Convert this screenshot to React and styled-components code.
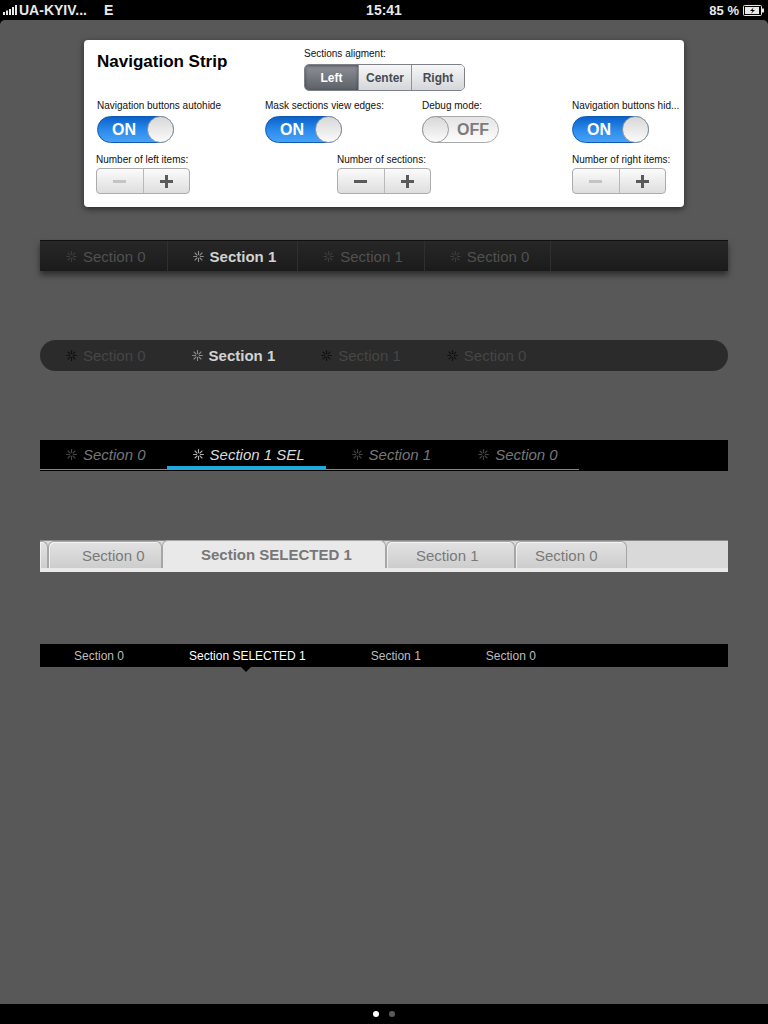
import React from 'react'
import styled, { createGlobalStyle, css } from 'styled-components'

const GlobalStyle = createGlobalStyle`
    html, body {
        margin: 0;
        padding: 0;
        background: #000;
    }
    body {
        font-family: "Liberation Sans", Arial, sans-serif;
    }
    * {
        box-sizing: border-box;
    }
`

const Screen = styled.div`
    width: 768px;
    height: 1024px;
    display: flex;
    flex-direction: column;
    background: #000;
    overflow: hidden;
`

const StatusBar = styled.div`
    height: 20px;
    flex: none;
    display: flex;
    align-items: center;
    padding: 0 4px 0 3px;
    color: #e8e8e8;
    font-size: 14px;
    font-weight: 700;
    position: relative;
`

const Carrier = styled.span`
    margin-left: 2px;
`

const Network = styled.span`
    margin-left: 17px;
`

const Clock = styled.span`
    position: absolute;
    left: 0;
    right: 0;
    text-align: center;
`

const Battery = styled.span`
    margin-left: auto;
    display: flex;
    align-items: center;
    gap: 4px;
    font-size: 13px;
`

const Main = styled.main`
    flex: 1;
    background: #585858;
    border-radius: 5px 5px 0 0;
    padding-top: 20px;
    display: flex;
    flex-direction: column;
`

const BottomBar = styled.div`
    height: 20px;
    flex: none;
    display: flex;
    justify-content: center;
    align-items: center;
    gap: 10px;
`

const Dot = styled.span`
    width: 6px;
    height: 6px;
    border-radius: 50%;
    background: ${p => (p.$active ? '#fff' : '#5a5a5a')};
`

/* settings card */

const Card = styled.section`
    margin: 0 84px;
    height: 167px;
    background: #fff;
    border-radius: 4px;
    box-shadow: 0 2px 6px rgba(0, 0, 0, 0.55);
    padding: 8px 13px 0 13px;
    display: flex;
    flex-direction: column;
    color: #000;
`

const Row = styled.div`
    display: flex;
    margin-top: ${p => p.$top || 0}px;
`

const Cell = styled.div`
    width: ${p => (p.$w ? `${p.$w}px` : 'auto')};
    flex: ${p => (p.$w ? 'none' : '1')};
    display: flex;
    flex-direction: column;
    align-items: flex-start;
    margin-left: ${p => p.$shift || 0}px;
`

const Title = styled.h1`
    margin: 4px 0 0 0;
    font-size: 17px;
    line-height: 20px;
    font-weight: 700;
`

const Label = styled.div`
    font-size: 10px;
    line-height: 12px;
    color: #111;
    white-space: nowrap;
`

const Segmented = styled.div`
    margin-top: 4px;
    display: flex;
    height: 27px;
    border: 1px solid #7d8187;
    border-radius: 5px;
    overflow: hidden;
`

const Segment = styled.div`
    width: ${p => p.$w}px;
    display: flex;
    align-items: center;
    justify-content: center;
    font-size: 12px;
    font-weight: 700;
    color: #474b52;
    background: linear-gradient(#f7f7f8, #d4d6da);
    & + & {
        border-left: 1px solid #8f9399;
    }
    ${p => p.$active && css`
        color: #fff;
        background: linear-gradient(#8d9197, #5c6167);
        box-shadow: inset 0 1px 3px rgba(0, 0, 0, 0.45);
    `}
`

const Switch = styled.div`
    margin-top: 4px;
    width: 77px;
    height: 27px;
    border-radius: 14px;
    position: relative;
    display: flex;
    align-items: center;
    font-size: 16px;
    font-weight: 700;
    ${p => (p.$on
        ? css`
            background: linear-gradient(#0b62c8, #2c8cee 55%, #48a2f5);
            color: #fff;
            border: 1px solid #0d5bb5;
            padding-left: 14px;
        `
        : css`
            background: linear-gradient(#e4e4e4, #fdfdfd);
            color: #7c7c7c;
            border: 1px solid #a9a9a9;
            padding-left: 34px;
        `)}
`

const Knob = styled.span`
    position: absolute;
    top: -1px;
    ${p => (p.$on ? 'right: -1px;' : 'left: -1px;')}
    width: 27px;
    height: 27px;
    border-radius: 50%;
    border: 1px solid #9a9a9a;
    background: linear-gradient(#d8d8d8, #fbfbfb);
`

const Stepper = styled.div`
    margin-top: 2px;
    width: 94px;
    height: 26px;
    display: flex;
    border: 1px solid #acacac;
    border-radius: 4px;
    overflow: hidden;
    background: linear-gradient(#fbfbfb, #dedede);
`

const StepHalf = styled.div`
    flex: 1;
    display: flex;
    align-items: center;
    justify-content: center;
    & + & {
        border-left: 1px solid #b9b9b9;
    }
`

const Bar = styled.span`
    position: relative;
    width: 13px;
    height: 3px;
    background: ${p => (p.$dim ? '#c4c4c4' : '#5a5a5a')};
    ${p => p.$plus && css`
        &::after {
            content: '';
            position: absolute;
            left: 5px;
            top: -5px;
            width: 3px;
            height: 13px;
            background: #5a5a5a;
        }
    `}
`

/* strips */

const Lane = styled.div`
    margin: ${p => p.$top}px 40px 0 40px;
`

const Spark = ({ color }) => (
    <svg width="11" height="11" viewBox="0 0 11 11">
        <g stroke={color} strokeWidth="1.1" strokeLinecap="round">
            <line x1="5.5" y1="0.6" x2="5.5" y2="3.6" />
            <line x1="5.5" y1="7.4" x2="5.5" y2="10.4" />
            <line x1="0.6" y1="5.5" x2="3.6" y2="5.5" />
            <line x1="7.4" y1="5.5" x2="10.4" y2="5.5" />
            <line x1="2" y1="2" x2="4.1" y2="4.1" />
            <line x1="6.9" y1="6.9" x2="9" y2="9" />
            <line x1="9" y1="2" x2="6.9" y2="4.1" />
            <line x1="4.1" y1="6.9" x2="2" y2="9" />
        </g>
    </svg>
)

const DarkStrip = styled.div`
    height: 31px;
    display: flex;
    background: ${p => (p.$pill ? '#2b2b2b' : 'linear-gradient(#272727, #1b1b1b)')};
    border-radius: ${p => (p.$pill ? '16px' : '0')};
    box-shadow: ${p => (p.$pill ? 'none' : '0 4px 6px rgba(0, 0, 0, 0.5)')};
    border-top: ${p => (p.$pill ? 'none' : '1px solid #111')};
`

const DarkItem = styled.div`
    display: flex;
    align-items: center;
    gap: 6px;
    padding: 0 21px 0 25px;
    font-size: 15px;
    font-weight: ${p => (p.$sel ? 700 : 400)};
    color: ${p => (p.$sel ? '#d2d2d2' : p.$pill ? '#464646' : '#505050')};
    white-space: nowrap;
    border-right: ${p => (p.$pill ? 'none' : '1px solid #2f2f2f')};
    &:first-child {
        padding-left: 26px;
    }
`

const LineStrip = styled.div`
    height: 31px;
    display: flex;
    background: #000;
`

const LineItem = styled.div`
    height: 30px;
    display: flex;
    align-items: center;
    gap: 6px;
    padding: 0 21px 0 26px;
    font-size: 15px;
    font-style: italic;
    color: ${p => (p.$sel ? '#dadada' : '#777')};
    white-space: nowrap;
    border-bottom: ${p => (p.$sel ? '4px' : '1px')} solid #22a9dc;
    ${p => p.$sel && css`
        padding-top: 3px;
    `}
`

const TabStrip = styled.div`
    height: 32px;
    display: flex;
    align-items: flex-end;
    background: #d9d9d9;
    border-top: 1px solid #8a8a8a;
    border-bottom: 4px solid #e9e9e9;
`

const Tab = styled.div`
    width: ${p => p.$w}px;
    height: 27px;
    flex: none;
    display: flex;
    align-items: center;
    padding-left: ${p => p.$pad || 0}px;
    font-size: 15px;
    color: #7a7a7a;
    white-space: nowrap;
    border: 1px solid #a6a6a6;
    border-bottom: none;
    border-radius: 6px 6px 0 0;
    background: linear-gradient(#e2e2e2, #cdcdcd);
    box-shadow: inset 1px 1px 0 rgba(255, 255, 255, 0.6);
    ${p => p.$edge && css`
        border-left: none;
        border-radius: 0 6px 0 0;
    `}
    ${p => p.$sel && css`
        height: 28px;
        font-weight: 700;
        color: #777;
        background: #e9e9e9;
        box-shadow: none;
    `}
`

const TextStrip = styled.div`
    height: 23px;
    display: flex;
    background: #000;
`

const TextItem = styled.div`
    position: relative;
    display: flex;
    align-items: center;
    padding: 0 31px 0 34px;
    font-size: 12px;
    color: ${p => (p.$sel ? '#fff' : '#bdbdbd')};
    white-space: nowrap;
    ${p => p.$sel && css`
        &::after {
            content: '';
            position: absolute;
            left: 50%;
            bottom: -5px;
            margin-left: -5px;
            border-left: 5px solid transparent;
            border-right: 5px solid transparent;
            border-top: 5px solid #000;
        }
    `}
`

const Signal = () => (
    <svg width="14" height="10" viewBox="0 0 14 10">
        <rect x="0" y="7" width="2" height="3" fill="#e8e8e8" />
        <rect x="3" y="5.5" width="2" height="4.5" fill="#e8e8e8" />
        <rect x="6" y="4" width="2" height="6" fill="#e8e8e8" />
        <rect x="9" y="2" width="2" height="8" fill="#e8e8e8" />
        <rect x="12" y="0" width="2" height="10" fill="#e8e8e8" />
    </svg>
)

const BatteryIcon = () => (
    <svg width="21" height="11" viewBox="0 0 21 11">
        <rect x="0.5" y="0.5" width="18" height="10" rx="1" fill="none" stroke="#e8e8e8" />
        <rect x="2" y="2" width="14" height="7" fill="#e8e8e8" />
        <rect x="19" y="3.5" width="2" height="4" fill="#e8e8e8" />
        <path d="M10.5 2.5 L7 6 L9.5 6 L8 8.8 L12 5 L9.6 5 Z" fill="#000" />
    </svg>
)

const darkItems = [
    { text: 'Section 0' },
    { text: 'Section 1', sel: true },
    { text: 'Section 1' },
    { text: 'Section 0' },
]

const lineItems = [
    { text: 'Section 0' },
    { text: 'Section 1 SEL', sel: true },
    { text: 'Section 1' },
    { text: 'Section 0' },
]

const tabs = [
    { w: 8, edge: true },
    { w: 114, pad: 33, text: 'Section 0' },
    { w: 224, pad: 38, text: 'Section SELECTED 1', sel: true },
    { w: 129, pad: 29, text: 'Section 1' },
    { w: 112, pad: 19, text: 'Section 0' },
]

const textItems = [
    { text: 'Section 0' },
    { text: 'Section SELECTED 1', sel: true },
    { text: 'Section 1' },
    { text: 'Section 0' },
]

function Toggle({ on }) {
    return (
        <Switch $on={on}>
            {on ? 'ON' : 'OFF'}
            <Knob $on={on} />
        </Switch>
    )
}

function Counter({ minusDim }) {
    return (
        <Stepper>
            <StepHalf><Bar $dim={minusDim} /></StepHalf>
            <StepHalf><Bar $plus /></StepHalf>
        </Stepper>
    )
}

export default function App() {
    return (
        <Screen>
            <GlobalStyle />
            <StatusBar>
                <Signal />
                <Carrier>UA-KYIV...</Carrier>
                <Network>E</Network>
                <Clock>15:41</Clock>
                <Battery>85 % <BatteryIcon /></Battery>
            </StatusBar>
            <Main>
                <Card>
                    <Row>
                        <Cell $w={207}>
                            <Title>Navigation Strip</Title>
                        </Cell>
                        <Cell>
                            <Label>Sections aligment:</Label>
                            <Segmented>
                                <Segment $w={53} $active>Left</Segment>
                                <Segment $w={53}>Center</Segment>
                                <Segment $w={53}>Right</Segment>
                            </Segmented>
                        </Cell>
                    </Row>
                    <Row $top={9}>
                        <Cell $w={168}>
                            <Label>Navigation buttons autohide</Label>
                            <Toggle on />
                        </Cell>
                        <Cell $w={157}>
                            <Label>Mask sections view edges:</Label>
                            <Toggle on />
                        </Cell>
                        <Cell $w={150}>
                            <Label>Debug mode:</Label>
                            <Toggle on={false} />
                        </Cell>
                        <Cell>
                            <Label>Navigation buttons hid...</Label>
                            <Toggle on />
                        </Cell>
                    </Row>
                    <Row $top={11}>
                        <Cell $w={241} $shift={-1}>
                            <Label>Number of left items:</Label>
                            <Counter minusDim />
                        </Cell>
                        <Cell $w={235}>
                            <Label>Number of sections:</Label>
                            <Counter />
                        </Cell>
                        <Cell>
                            <Label>Number of right items:</Label>
                            <Counter minusDim />
                        </Cell>
                    </Row>
                </Card>

                <Lane $top={33}>
                    <DarkStrip>
                        {darkItems.map((it, i) => (
                            <DarkItem key={i} $sel={it.sel}>
                                <Spark color={it.sel ? '#8a8a8a' : '#3c3c3c'} />
                                {it.text}
                            </DarkItem>
                        ))}
                    </DarkStrip>
                </Lane>

                <Lane $top={69}>
                    <DarkStrip $pill>
                        {darkItems.map((it, i) => (
                            <DarkItem key={i} $sel={it.sel} $pill>
                                <Spark color={it.sel ? '#8a8a8a' : '#111'} />
                                {it.text}
                            </DarkItem>
                        ))}
                    </DarkStrip>
                </Lane>

                <Lane $top={69}>
                    <LineStrip>
                        {lineItems.map((it, i) => (
                            <LineItem key={i} $sel={it.sel}>
                                <Spark color={it.sel ? '#b0b0b0' : '#444'} />
                                {it.text}
                            </LineItem>
                        ))}
                    </LineStrip>
                </Lane>

                <Lane $top={69}>
                    <TabStrip>
                        {tabs.map((t, i) => (
                            <Tab key={i} $w={t.w} $pad={t.pad} $sel={t.sel} $edge={t.edge}>
                                {t.text}
                            </Tab>
                        ))}
                    </TabStrip>
                </Lane>

                <Lane $top={72}>
                    <TextStrip>
                        {textItems.map((it, i) => (
                            <TextItem key={i} $sel={it.sel}>{it.text}</TextItem>
                        ))}
                    </TextStrip>
                </Lane>
            </Main>
            <BottomBar>
                <Dot $active />
                <Dot />
            </BottomBar>
        </Screen>
    )
}
